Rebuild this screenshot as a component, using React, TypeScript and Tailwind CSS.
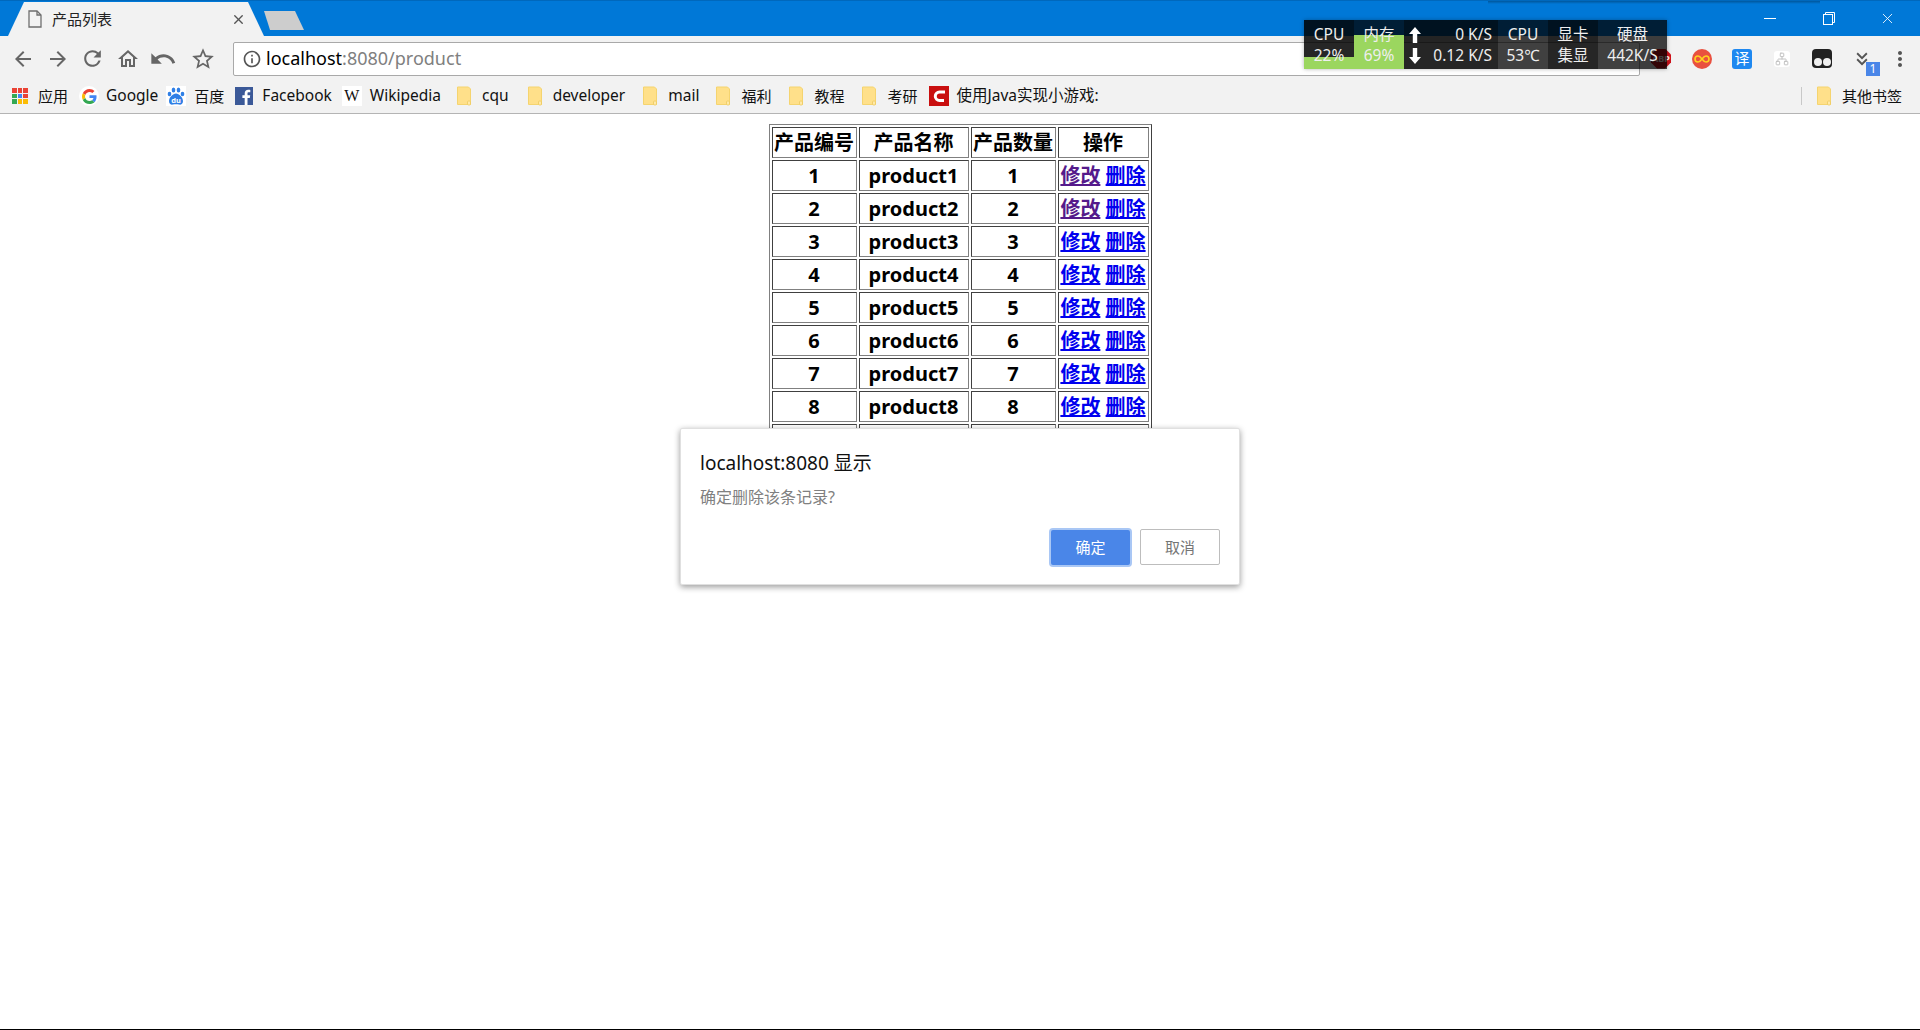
import React from 'react';
import { X, Network } from 'lucide-react';
import { MdArrowBack, MdArrowForward, MdRefresh, MdOutlineHome, MdUndo, MdStarBorder, MdInfoOutline, MdKeyboardDoubleArrowDown, MdMoreVert } from 'react-icons/md';

const font = 'font-["Noto_Sans","Noto_Sans_CJK_SC",sans-serif]';
const products = [1, 2, 3, 4, 5, 6, 7, 8, 9, 10];

const Folder = () => (
  <svg width="16" height="20" viewBox="0 0 16 20" className="shrink-0">
    <path d="M1.5 1h11l2 2v15.500h-13z" fill="#ffe08a" stroke="#f5d46f" />
    <rect x="11.500" y="15" width="3" height="4" rx="1" fill="#ffe9a8" stroke="#eec95e" strokeWidth="0.8" />
  </svg>
);

const AppsIcon = () => {
  const colors = ['#ea4335', '#ea4335', '#ea4335', '#34a853', '#4285f4', '#ea4335', '#34a853', '#fbbc05', '#fbbc05'];
  return (
    <div className="grid grid-cols-3 gap-[1px] w-[16px] shrink-0">
      {colors.map((c, i) => (
        <div key={i} className="w-[4.500px] h-[4.500px]" style={{ backgroundColor: c }} />
      ))}
    </div>
  );
};

const GoogleIcon = () => (
  <div className="w-[20px] h-[20px] rounded-full bg-white flex items-center justify-center shrink-0 -mx-[1px]">
    <svg width="15" height="15" viewBox="0 0 48 48">
      <path fill="#ea4335" d="M24 9.500c3.500 0 6.700 1.200 9.200 3.600l6.800-6.800C35.900 2.500 30.500 0 24 0 14.600 0 6.500 5.400 2.600 13.200l8 6.200C12.400 13.700 17.700 9.500 24 9.500z" />
      <path fill="#4285f4" d="M46.500 24.500c0-1.600-.1-3.100-.4-4.500H24v9h12.700c-.6 3-2.200 5.400-4.700 7.100l7.700 6c4.500-4.200 6.800-10.300 6.800-17.600z" />
      <path fill="#fbbc05" d="M10.600 28.600c-.5-1.500-.8-3-.8-4.600s.3-3.100.8-4.600l-8-6.200C.9 16.500 0 20.100 0 24s.9 7.500 2.600 10.800l8-6.200z" />
      <path fill="#34a853" d="M24 48c6.500 0 11.900-2.100 15.900-5.800l-7.700-6c-2.200 1.500-4.900 2.300-8.200 2.300-6.300 0-11.600-4.200-13.400-9.900l-8 6.200C6.500 42.600 14.600 48 24 48z" />
    </svg>
  </div>
);

const BaiduIcon = () => (
  <svg width="20" height="20" viewBox="0 0 20 20" className="shrink-0 bg-white">
    <ellipse cx="3.500" cy="8" rx="1.800" ry="2.300" fill="#2f7fe6" />
    <ellipse cx="7.500" cy="4" rx="1.800" ry="2.500" fill="#2f7fe6" />
    <ellipse cx="12.500" cy="4" rx="1.800" ry="2.500" fill="#2f7fe6" />
    <ellipse cx="16.500" cy="8" rx="1.800" ry="2.300" fill="#2f7fe6" />
    <path d="M10 7.500c-3 0-7 4-7 7.500C3 18 5 19 7 18.600c2-.4 4-.4 6 0 2 .4 4-.6 4-3.600C17 11.500 13 7.500 10 7.500z" fill="#2f7fe6" />
    <text x="10" y="16.500" textAnchor="middle" fontSize="7.500" fontWeight="700" fill="#fff">du</text>
  </svg>
);

const FacebookIcon = () => (
  <svg width="18" height="18" viewBox="0 0 18 18" className="shrink-0">
    <rect width="18" height="18" fill="#3b5998" />
    <path d="M12.500 18v-7h2.300l.4-2.700h-2.700V6.600c0-.8.200-1.300 1.300-1.300h1.500V2.900c-.3 0-1.100-.1-2.100-.1-2.100 0-3.500 1.300-3.500 3.600v1.900H7.400V11h2.300v7z" fill="#fff" />
  </svg>
);

const CsdnIcon = () => (
  <svg width="20" height="20" viewBox="0 0 20 20" className="shrink-0">
    <rect width="20" height="20" fill="#c90f0f" />
    <path d="M16 6H10.500a4.200 4.200 0 0 0 0 8.400H15" fill="none" stroke="#fff" strokeWidth="3" />
  </svg>
);

const NetArrow = ({ down }: { down?: boolean }) => (
  <svg width="14" height="16" viewBox="0 0 14 16" className={`ml-[2px] ${down ? 'rotate-180' : ''}`}>
    <path d="M7 0l6 7H9.200v9H4.800V7H1z" fill="#fff" />
  </svg>
);

const Bookmark = ({ icon, label, className, latin }: { icon: React.ReactNode; label: string; className: string; latin?: boolean }) => (
  <div className={`flex items-center shrink-0 ${className}`}>
    {icon}
    <span className={`text-[#111] whitespace-nowrap ${latin ? 'text-[15.500px]' : 'text-[15px]'}`}>{label}</span>
  </div>
);

const MonitorCell = ({ top, bottom, className }: { top: string; bottom: string; className: string }) => (
  <div className={`flex flex-col items-center justify-center pt-[1px] text-[15.500px] leading-[21px] text-[#eeeeee] whitespace-nowrap ${className}`}>
    <span>{top}</span>
    <span>{bottom}</span>
  </div>
);

const TableCell = ({ children, className = '' }: { children: React.ReactNode; className?: string }) => (
  <td className={`h-[31px] p-0 text-center align-middle leading-[28px] overflow-hidden border border-t-[#404040] border-l-[#404040] border-r-[#808080] border-b-[#808080] ${className}`}>
    {children}
  </td>
);

export default function App() {
  return (
    <div className={`relative w-full h-[1030px] overflow-hidden bg-white flex flex-col border-b border-black ${font}`}>
      {/* Tab strip */}
      <div className="relative h-[36px] bg-[#0078d7] border-t border-[#0068bc] flex items-end shrink-0">
        <div className="absolute top-0 left-[1488px] w-[332px] h-[3px] bg-gradient-to-b from-[#00579c] to-[#0078d7]" />
        <div className="ml-[8px] w-[256px] h-[34px] bg-[#f2f2f2] flex items-center pl-[20px] pr-[18px] [clip-path:polygon(0_100%,16px_0,240px_0,100%_100%)]">
          <svg width="14" height="18" viewBox="0 0 14 18" fill="none" stroke="#6e6e6e" strokeWidth="1.300">
            <path d="M1 1h8l4 4v12H1z" />
            <path d="M9 1v4h4" />
          </svg>
          <span className="ml-[10px] text-[15px] text-[#222] flex-1">产品列表</span>
          <X size={15} strokeWidth={2.2} className="text-[#555]" />
        </div>
        <div className="mb-[6px] w-[40px] h-[19px] bg-[#cdcdcd] [clip-path:polygon(6px_100%,100%_100%,31px_0,0_0)]" />
        <div className="ml-auto flex items-center h-[35px] self-start text-white pr-[3px]">
          <div className="w-[59px] flex justify-center">
            <div className="w-[12px] h-[1px] bg-white" />
          </div>
          <div className="w-[59px] flex justify-center">
            <svg width="12" height="13" viewBox="0 0 12 13" fill="none" stroke="#fff">
              <rect x="0.500" y="2.500" width="9" height="10" />
              <path d="M2.500 2.500v-2h9v10h-2" />
            </svg>
          </div>
          <div className="w-[59px] flex justify-center">
            <X size={17} strokeWidth={1.2} />
          </div>
        </div>
      </div>

      {/* Toolbar */}
      <div className="h-[41px] bg-[#f2f2f2] flex items-center pl-[5px] pt-[4px] shrink-0">
        <div className="w-[35px] flex justify-center"><MdArrowBack size={24} className="text-[#666]" /></div>
        <div className="w-[35px] flex justify-center"><MdArrowForward size={24} className="text-[#666]" /></div>
        <div className="w-[35px] flex justify-center"><MdRefresh size={25} className="text-[#666]" /></div>
        <div className="w-[35px] flex justify-center"><MdOutlineHome size={24} className="text-[#666]" /></div>
        <div className="w-[35px] flex justify-center"><MdUndo size={28} className="text-[#666]" /></div>
        <div className="w-[36px] flex justify-end"><MdStarBorder size={26} className="text-[#666]" /></div>
        <div className="ml-[17px] w-[1407px] h-[34px] bg-white border border-[#a9a9a9] rounded-[2px] flex items-center pl-[8px] shrink-0">
          <MdInfoOutline size={20} className="text-[#555]" />
          <span className="ml-[4px] text-[18px] text-black">
            localhost<span className="text-[#808080]">:8080/product</span>
          </span>
        </div>
        <div className="w-[42px] flex justify-center shrink-0">
          <div className="w-[20px] h-[20px] bg-[#d0121b] [clip-path:polygon(30%_0,70%_0,100%_30%,100%_70%,70%_100%,30%_100%,0_70%,0_30%)] flex items-center justify-center text-white text-[9px] leading-none font-bold">ABP</div>
        </div>
        <div className="w-[40px] flex justify-center shrink-0">
          <svg width="20" height="20" viewBox="0 0 20 20">
            <circle cx="10" cy="10" r="10" fill="#e9503f" />
            <path d="M10 10c-1.500-2-2.500-3-4-3a3 3 0 0 0 0 6c1.500 0 2.500-1 4-3zm0 0c1.500 2 2.500 3 4 3a3 3 0 0 0 0-6c-1.500 0-2.500 1-4 3z" fill="none" stroke="#ffd21f" strokeWidth="1.600" />
          </svg>
        </div>
        <div className="w-[40px] flex justify-center shrink-0">
          <div className="w-[20px] h-[20px] rounded-[3px] bg-[#1e88f0] flex items-center justify-center text-white text-[15px] leading-none">译</div>
        </div>
        <div className="w-[40px] flex justify-center shrink-0">
          <div className="w-[16px] h-[16px] rounded-[3px] bg-white flex items-center justify-center">
            <Network size={14} strokeWidth={1.6} className="text-[#bdbdbd]" />
          </div>
        </div>
        <div className="w-[40px] flex justify-center shrink-0">
          <div className="w-[20px] h-[19px] rounded-[4px] bg-[#222] flex items-end justify-center gap-[1px] pb-[2px]">
            <div className="w-[8px] h-[8px] rounded-full bg-[#f0f0f0]" />
            <div className="w-[8px] h-[8px] rounded-full bg-[#f0f0f0]" />
          </div>
        </div>
        <div className="relative w-[40px] flex justify-center shrink-0">
          <MdKeyboardDoubleArrowDown size={22} className="text-[#555]" />
          <div className="absolute left-[24px] top-[14px] w-[14px] h-[14px] bg-[#4a86e8] text-white text-[12px] leading-[14px] text-center">1</div>
        </div>
        <div className="w-[36px] flex justify-center shrink-0">
          <MdMoreVert size={24} className="text-[#555]" />
        </div>
      </div>

      {/* Bookmarks bar */}
      <div className="h-[37px] bg-[#f2f2f2] border-b border-[#b4b4b4] flex items-center pl-[12px] pt-[2px] shrink-0">
        <Bookmark icon={<AppsIcon />} label="应用" className="gap-[10px] mr-[12px]" />
        <Bookmark icon={<GoogleIcon />} label="Google" className="gap-[8px] mr-[8px]" latin />
        <Bookmark icon={<BaiduIcon />} label="百度" className="gap-[8px] mr-[11px]" />
        <Bookmark icon={<FacebookIcon />} label="Facebook" className="gap-[9px] mr-[10px]" latin />
        <Bookmark icon={<span className="w-[20px] h-[20px] bg-white text-center text-[16px] leading-[20px] text-[#111] font-['Liberation_Serif',serif]">W</span>} label="Wikipedia" className="gap-[8px] mr-[15px]" latin />
        <Bookmark icon={<Folder />} label="cqu" className="gap-[10px] mr-[18px]" latin />
        <Bookmark icon={<Folder />} label="developer" className="gap-[10px] mr-[17px]" latin />
        <Bookmark icon={<Folder />} label="mail" className="gap-[10px] mr-[16px]" latin />
        <Bookmark icon={<Folder />} label="福利" className="gap-[10px] mr-[17px]" />
        <Bookmark icon={<Folder />} label="教程" className="gap-[10px] mr-[17px]" />
        <Bookmark icon={<Folder />} label="考研" className="gap-[10px] mr-[11px]" />
        <Bookmark icon={<CsdnIcon />} label="使用Java实现小游戏:" className="gap-[8px]" latin />
        <div className="ml-auto flex items-center h-[24px] pr-[18px]">
          <div className="w-[1px] h-[18px] bg-[#c8c8c8] mr-[14px]" />
          <Bookmark icon={<Folder />} label="其他书签" className="gap-[10px]" />
        </div>
      </div>

      {/* Page content */}
      <div className="flex-1 pt-[10px]">
        <table className="mx-auto border-separate border-spacing-[2px] border border-t-[#808080] border-l-[#808080] border-r-[#404040] border-b-[#404040] table-fixed w-[382px] text-[20px] font-bold text-black">
          <thead>
            <tr>
              <TableCell className="w-[85px] whitespace-nowrap">产品编号</TableCell>
              <TableCell className="w-[110px] whitespace-nowrap">产品名称</TableCell>
              <TableCell className="w-[85px] whitespace-nowrap">产品数量</TableCell>
              <TableCell className="w-[91px] whitespace-nowrap">操作</TableCell>
            </tr>
          </thead>
          <tbody>
            {products.map((n) => (
              <tr key={n}>
                <TableCell>{n}</TableCell>
                <TableCell>product{n}</TableCell>
                <TableCell>{n}</TableCell>
                <TableCell className="whitespace-nowrap">
                  <a href="#" className={`underline ${n <= 2 ? 'text-[#551a8b]' : 'text-[#0000ee]'}`}>修改</a>
                  <span> </span>
                  <a href="#" className="underline text-[#0000ee]">删除</a>
                </TableCell>
              </tr>
            ))}
          </tbody>
        </table>
      </div>

      {/* System monitor overlay */}
      <div className="absolute left-[1304px] top-[20px] w-[363px] h-[49px] flex shadow-[0_0_4px_rgba(0,0,0,0.3)]">
        <div className="relative w-[50px] overflow-hidden bg-black/85">
          <div className="absolute left-0 right-0 bottom-0 h-[12px] bg-[#9bd65f]" />
          <MonitorCell top="CPU" bottom="22%" className="relative h-full" />
        </div>
        <div className="relative w-[50px] overflow-hidden bg-black/75">
          <div className="absolute left-0 right-0 bottom-0 h-[34px] bg-[#9bd65f]" />
          <MonitorCell top="内存" bottom="69%" className="relative h-full" />
        </div>
        <div className="w-[94px] flex flex-col justify-center pt-[1px] pl-[2px] pr-[6px] text-[15.500px] leading-[21px] text-[#eeeeee] whitespace-nowrap bg-black/85">
          <div className="flex items-center justify-between">
            <NetArrow />
            <span>0 K/S</span>
          </div>
          <div className="flex items-center justify-between">
            <NetArrow down />
            <span>0.12 K/S</span>
          </div>
        </div>
        <MonitorCell top="CPU" bottom="53℃" className="w-[50px] bg-black/75" />
        <MonitorCell top="显卡" bottom="集显" className="w-[50px] bg-black/85" />
        <MonitorCell top="硬盘" bottom="442K/S" className="w-[69px] bg-black/75" />
      </div>

      {/* Alert dialog */}
      <div className="absolute left-[680px] top-[428px] w-[560px] h-[157px] bg-white rounded-[2px] border border-[#e0e0e0] shadow-[0_2px_6px_rgba(0,0,0,0.4)] flex flex-col pl-[19px] pr-[19px] pt-[21px]">
        <div className="text-[19px] leading-[26px] text-[#111]">localhost:8080 显示</div>
        <div className="mt-[10px] text-[16px] leading-[22px] text-[#808080]">确定删除该条记录?</div>
        <div className="mt-[21px] flex justify-end gap-[10px]">
          <button className="w-[79px] h-[35px] mt-[1px] rounded-[2px] bg-[#4a86e8] text-white text-[15px] ring-2 ring-[#a9c7f5]">确定</button>
          <button className="w-[80px] h-[36px] rounded-[2px] bg-white border border-[#bdbdbd] text-[#757575] text-[15px]">取消</button>
        </div>
      </div>
    </div>
  );
}
